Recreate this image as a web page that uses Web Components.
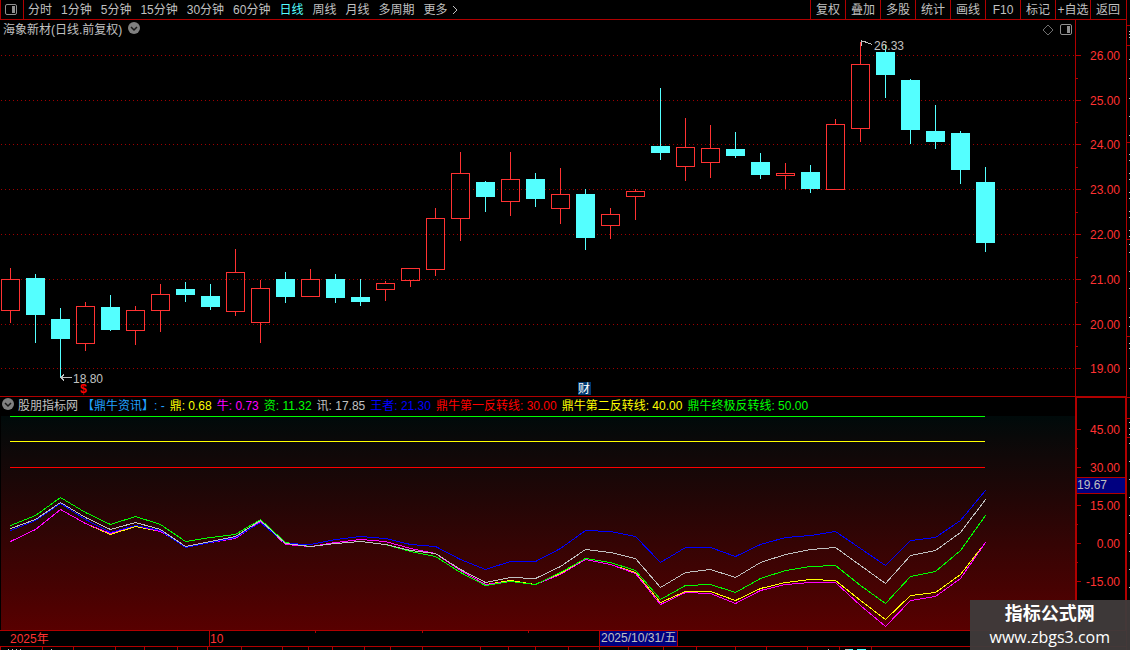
<!DOCTYPE html>
<html lang="zh-CN">
<head>
<meta charset="utf-8">
<title>海象新材 日线</title>
<style>
  :root {
    --line: #b00000;
    --up: #ff3232;
    --down: #54ffff;
    --text: #c0c0c0;
    --mark: #000080;
  }
  body {
    margin: 0;
    background: #000;
    color: var(--text);
    font: 12px/16px "Liberation Sans", "Noto Sans CJK SC", sans-serif;
  }
</style>
</head>
<body>
<chart-app></chart-app>

<script>
/* ────────────────────────────────────────────────────────
   data: y values are rows of the chart sheet
   (price pane 20-396, indicator pane 416-630)
   ──────────────────────────────────────────────────────── */
const STEP = 25;
const FIRST_X = 10;

// [rising, high, body top, body bottom, low]
const CANDLES = [
  [1, 268, 279, 311, 323], [0, 274, 278, 315, 343], [0, 308, 319, 339, 378], [1, 302, 306, 344, 351],
  [0, 295, 307, 330, 331], [1, 306, 310, 331, 345], [1, 284, 294, 311, 332], [0, 282, 289, 295, 302],
  [0, 284, 296, 307, 310], [1, 249, 272, 312, 316], [1, 280, 288, 323, 343], [0, 272, 279, 297, 303],
  [1, 269, 279, 297, 297], [0, 274, 279, 298, 303], [0, 279, 297, 302, 306], [1, 281, 283, 290, 301],
  [1, 268, 268, 281, 287], [1, 208, 218, 270, 276], [1, 152, 173, 219, 241], [0, 181, 182, 197, 212],
  [1, 152, 179, 202, 216], [0, 173, 179, 199, 207], [1, 168, 194, 209, 224], [0, 189, 194, 238, 250],
  [1, 208, 214, 226, 239], [1, 189, 191, 197, 220], [0, 88, 146, 153, 160], [1, 118, 147, 167, 181],
  [1, 125, 148, 163, 178], [0, 132, 149, 156, 158], [0, 153, 162, 175, 179], [1, 163, 173, 176, 189],
  [0, 165, 172, 189, 193], [1, 119, 124, 190, 190], [1, 42, 64, 129, 142], [0, 45, 52, 75, 98],
  [0, 79, 80, 130, 144], [0, 105, 131, 142, 149], [0, 131, 133, 170, 184], [0, 167, 182, 243, 252]
];

const SERIES = [
  { color: "#ffff00", ys: [541, 529, 509, 523, 534, 526, 531, 546, 542, 538, 521, 544, 546, 542, 539, 541, 548, 553, 570, 584,
    580, 584, 573, 559, 564, 572, 602, 591, 591, 600, 588, 582, 579, 580, 600, 619, 595, 592, 574, 542] },
  { color: "#ff00ff", ys: [541, 529, 509, 523, 533, 525, 531, 546, 542, 538, 521, 544, 546, 542, 539, 541, 548, 553, 570, 584,
    581, 584, 574, 559, 564, 573, 604, 592, 593, 603, 590, 584, 582, 582, 605, 626, 600, 596, 578, 542] },
  { color: "#00ff00", ys: [525, 515, 497, 512, 524, 516, 524, 541, 537, 534, 519, 542, 546, 543, 541, 544, 551, 556, 572, 585,
    581, 584, 572, 558, 562, 570, 599, 585, 584, 592, 578, 570, 566, 565, 585, 603, 576, 571, 550, 515] },
  { color: "#0000ff", ys: [530, 520, 503, 519, 532, 525, 530, 547, 542, 537, 522, 543, 544, 539, 536, 538, 544, 546, 559, 569,
    561, 561, 548, 530, 531, 536, 562, 547, 547, 556, 544, 537, 535, 531, 548, 565, 540, 537, 520, 490] },
  { color: "#c0c0c0", ys: [528, 519, 502, 517, 529, 522, 529, 546, 541, 536, 520, 543, 546, 543, 541, 544, 550, 553, 569, 582,
    577, 578, 566, 549, 552, 558, 587, 572, 569, 577, 562, 554, 549, 547, 565, 583, 555, 550, 532, 499] }
];

const LEVELS = [[416, "#00ff00"], [441, "#ffff00"], [467, "#ff0000"]];

const PRICE_TICKS = [[55, "26.00"], [100, "25.00"], [144, "24.00"], [189, "23.00"],
  [234, "22.00"], [279, "21.00"], [324, "20.00"], [368, "19.00"]];
const PRICE_MINOR = [78, 122, 167, 212, 257, 302, 346];
const VALUE_TICKS = [[429, "45.00"], [467, "30.00"], [505, "15.00"], [543, "0.00"], [581, "-15.00"]];
const VALUE_MINOR = [448, 486, 524, 562];

const LEGEND = [
  ["#ffff00", "鼎: 0.68"], ["#ff00ff", "牛: 0.73"], ["#00ff00", "资: 11.32"], ["#c0c0c0", "讯: 17.85"],
  ["#0000ff", "王者: 21.30"], ["#ff0000", "鼎牛第一反转线: 30.00"],
  ["#ffff00", "鼎牛第二反转线: 40.00"], ["#00ff00", "鼎牛终极反转线: 50.00"]
];

/* ────────────────────────────────────────────────────────
   helpers
   ──────────────────────────────────────────────────────── */
const BUTTON_CSS = `
  button { margin: 0; padding: 0; border: 0; background: none; color: inherit; font: inherit; cursor: pointer; }
  svg { display: block; }
`;

function define(name, render) {
  customElements.define(name, class extends HTMLElement {
    connectedCallback() {
      if (this.shadowRoot) return;
      this.attachShadow({ mode: "open" }).innerHTML = render(this);
    }
  });
}

const barX = i => FIRST_X + i * STEP;

function candle([rising, high, top, bottom, low], i) {
  const x = barX(i);
  const color = rising ? "var(--up)" : "var(--down)";
  const wick = (a, b) => b > a ? `<rect x="${x}" y="${a}" width="1" height="${b - a}" fill="${color}"/>` : "";
  const body = rising
    ? `<path d="M${x - 9} ${top}h19v${bottom - top}h-19zM${x - 8} ${top + 1}v${bottom - top - 2}h17v-${bottom - top - 2}z" fill="${color}"/>`
    : `<rect x="${x - 9}" y="${top}" width="19" height="${bottom - top}" fill="${color}"/>`;
  return wick(high, top) + body + wick(bottom, low);
}

/* ────────────────────────────────────────────────────────
   small parts
   ──────────────────────────────────────────────────────── */
define("fold-button", el => `
  <style>
    ${BUTTON_CSS}
    :host { display: block; flex: none; }
  </style>
  <button aria-label="${el.getAttribute("label")}">
    <svg width="12" height="12" viewBox="0 0 12 12">
      <circle cx="6" cy="6" r="6" fill="#808080"/>
      <path d="M3 5l3 3 3-3" fill="none" stroke="#181818" stroke-width="1.5"/>
    </svg>
  </button>`);

define("panel-icon", () => `
  <style>
    :host { display: block; }
    svg { display: block; }
  </style>
  <svg width="12" height="12" viewBox="0 0 12 12">
    <rect x=".5" y=".5" width="11" height="10" rx="1.5" fill="none" stroke="#909090"/>
    <path d="M7 2h3v7h-3z" fill="#909090"/>
  </svg>`);

define("period-bar", () => {
  const periods = ["分时", "1分钟", "5分钟", "15分钟", "30分钟", "60分钟", "日线", "周线", "月线", "多周期"];
  return `
  <style>
    ${BUTTON_CSS}
    :host { display: flex; align-items: stretch; }
    .panel { width: 24px; box-sizing: border-box; border: solid var(--line); border-width: 0 1px; padding: 0 4px; }
    nav { display: flex; gap: 9px; padding-left: 4px; white-space: nowrap; }
    .active { color: var(--down); }
    .more { display: flex; align-items: center; gap: 4px; }
  </style>
  <button class="panel" aria-label="侧栏"><panel-icon></panel-icon></button>
  <nav>
    ${periods.map(p => `<button class="${p === "日线" ? "active" : ""}">${p}</button>`).join("")}
    <button class="more">更多
      <svg width="6" height="10" viewBox="0 0 6 10"><path d="M1 1l4 4-4 4" fill="none" stroke="#c0c0c0"/></svg>
    </button>
  </nav>`;
});

define("tool-menu", () => `
  <style>
    ${BUTTON_CSS}
    :host { display: flex; white-space: nowrap; padding-right: 1px; }
    button { width: 35px; border-left: 1px solid var(--line); }
  </style>
  ${["复权", "叠加", "多股", "统计", "画线", "F10", "标记", "+自选", "返回"].map(t => `<button>${t}</button>`).join("")}`);

define("legend-item", el => `
  <style>
    :host { display: block; color: ${el.getAttribute("color")}; white-space: nowrap; }
  </style>
  <slot></slot>`);

define("site-stamp", () => `
  <style>
    :host {
      display: flex; flex-direction: column; align-items: center;
      padding: 2px 20px; white-space: nowrap;
      background: rgba(64, 58, 58, .96); color: #fff;
    }
    strong { font: bold 18px/24px "Liberation Sans", "Noto Sans CJK SC", sans-serif; }
    a { color: inherit; text-decoration: none; font: 16px/22px "Open Sans", "Noto Sans", sans-serif; }
  </style>
  <strong>指标公式网</strong>
  <a href="#">www.zbgs3.com</a>`);

/* ────────────────────────────────────────────────────────
   panes and axes
   ──────────────────────────────────────────────────────── */
define("price-pane", () => `
  <style>
    ${BUTTON_CSS}
    :host { display: block; position: relative; }
    header {
      position: absolute; inset: 0 0 auto 0; height: 19px;
      display: flex; align-items: center; gap: 6px; padding: 0 3px;
    }
    .tools { display: flex; align-items: center; gap: 6px; margin-left: auto; }
  </style>
  <svg width="100%" height="376" shape-rendering="crispEdges">
    <g transform="translate(0 -20)">
      ${PRICE_TICKS.map(([y]) => `<line x1="1" x2="100%" y1="${y}.5" y2="${y}.5" stroke="#a00000" stroke-dasharray="1 3"/>`).join("")}
      ${CANDLES.map(candle).join("")}
      <g fill="none" stroke="#c0c0c0">
        <path d="M861.5 46v-5h4M861 40.500l11 4"/>
        <path d="M61 377.500h11M64 374.500l-3 3 3 3"/>
      </g>
      <g fill="#c0c0c0">
        <text x="874" y="50">26.33</text>
        <text x="73" y="383">18.80</text>
      </g>
      <text x="80" y="393" fill="#ff0000" font-weight="bold">$</text>
      <rect x="578" y="382" width="13" height="13" fill="#003870"/>
      <text x="578" y="393" fill="#fff">财</text>
    </g>
  </svg>
  <header>
    <span>海象新材(日线.前复权)</span>
    <fold-button label="展开"></fold-button>
    <div class="tools">
      <button aria-label="标记点">
        <svg width="12" height="12" viewBox="0 0 12 12"><path d="M6 1l5 5-5 5-5-5z" fill="none" stroke="#707070"/></svg>
      </button>
      <button aria-label="右侧栏"><panel-icon></panel-icon></button>
    </div>
  </header>`);

define("indicator-pane", () => `
  <style>
    :host { display: block; border-top: 1px solid var(--line); }
    header, .title { display: flex; align-items: center; white-space: nowrap; }
    header { gap: 5px; height: 19px; padding: 0 2px 2px; box-sizing: border-box; }
    .title { gap: 4px; }
    .source { color: #20a0ff; }
    svg { display: block; margin-left: 1px; background: linear-gradient(#000a0a, #580000); }
  </style>
  <header>
    <div class="title">
      <fold-button label="折叠指标"></fold-button>
      <span>股朋指标网</span>
      <span class="source">【鼎牛资讯】: -</span>
    </div>
    ${LEGEND.map(([color, text]) => `<legend-item color="${color}">${text}</legend-item>`).join("")}
  </header>
  <svg width="100%" height="214" shape-rendering="crispEdges">
    <g transform="translate(-1 -416)">
      ${LEVELS.map(([y, color]) => `<rect x="10" y="${y}" width="975" height="1" fill="${color}"/>`).join("")}
      <g transform="translate(.5 .5)" fill="none">
        ${SERIES.map(s => `<polyline stroke="${s.color}" points="${s.ys.map((y, i) => `${barX(i)},${y}`).join(" ")}"/>`).join("")}
      </g>
    </g>
  </svg>`);

define("value-axis", el => {
  const price = el.getAttribute("kind") === "price";
  const ticks = price ? PRICE_TICKS : VALUE_TICKS;
  const minor = price ? PRICE_MINOR : VALUE_MINOR;
  const edge = price ? 1 : 2;
  const top = price ? 20 : 398;
  const height = price ? 376 : 232;
  const mark = price ? "" : `
    <rect x="0" y="477" width="100%" height="17" fill="var(--line)"/>
    <rect x="0" y="478" width="100%" height="15" fill="var(--mark)"/>
    <text x="0" y="489" fill="#c0c0c0">19.67</text>`;
  return `
  <style>
    :host { display: block; flex: none; width: 51px; box-sizing: border-box; border-left: ${edge}px solid var(--line); }
    :host([kind="value"]) { border-top: 2px solid var(--line); border-right: 1px solid var(--line); }
    svg { display: block; }
  </style>
  <svg width="100%" height="${height}" shape-rendering="crispEdges">
    <g transform="translate(0 -${top})">
      <g fill="var(--line)">
        ${ticks.map(([y]) => `<rect x="0" y="${y}" width="${6 - edge}" height="1"/>`).join("")}
        ${minor.map(y => `<rect x="0" y="${y}" width="${3 - edge}" height="1"/>`).join("")}
      </g>
      <g fill="var(--up)" text-anchor="end">
        ${ticks.map(([y, label]) => `<text x="${45 - edge}" y="${y + 5}">${label}</text>`).join("")}
      </g>
      ${mark}
    </g>
  </svg>`;
});

define("time-axis", () => `
  <style>
    :host { display: block; border: solid var(--line); border-width: 1px 0; }
    svg { display: block; overflow: visible; }
  </style>
  <svg width="100%" height="15" shape-rendering="crispEdges">
    <g fill="var(--line)">
      <rect x="209" y="0" width="1" height="15"/>
      ${[315, 422, 528].map(x => `<rect x="${x}" y="0" width="1" height="2"/>`).join("")}
      <rect x="599" y="-1" width="79" height="17"/>
    </g>
    <rect x="600" y="0" width="77" height="15" fill="var(--mark)"/>
    <g fill="var(--up)">
      <text x="10" y="12">2025年</text>
      <text x="210" y="12">10</text>
    </g>
    <text x="601" y="11" fill="#c0c0c0">2025/10/31/五</text>
  </svg>`);

// top edge of the quote table that continues below the window
define("table-edge", () => {
  const cols = [0, 42, 73, 115, 144, 177, 207, 241, 282, 308, 332, 364, 390, 422, 480, 508, 535,
    568, 599, 628, 663, 696, 735, 766, 807, 839, 871];
  return `
  <style>
    :host, svg { display: block; }
  </style>
  <svg width="100%" height="3" shape-rendering="crispEdges">
    <path d="${cols.map(x => `M${x} 0h1v3h-1z`).join("")}" fill="var(--line)"/>
    <path d="M8 2h1v1h-1zM12 2h1v1h-1zM16 2h1v1h-1zM20 2h1v1h-1zM51 2h1v1h-1zM828 2h1v1h-1zM845 2h4v1h-4z" fill="#c0c0c0"/>
    <path d="M849 2h4v1h-4zM857 2h9v1h-9z" fill="var(--down)"/>
  </svg>`;
});

define("side-rail", () => {
  const rules = [25, 45, 142, 239, 336, 397, 418, 437];
  const marks = [31, 34, 37, 59, 78, 98, 116, 135, 154, 160, 173, 179, 192, 198, 211, 217, 230, 236, 244, 252,
    271, 288, 317, 326, 343, 348, 368, 422, 428, 434, 443, 461, 479, 497, 515, 533, 551, 569, 587];
  return `
  <style>
    :host { display: block; flex: none; width: 3px; border-left: 1px solid var(--line); }
    svg { display: block; }
  </style>
  <svg width="3" height="650" shape-rendering="crispEdges">
    <path d="${rules.map(y => `M0 ${y}h3v1h-3z`).join("")}" fill="var(--line)"/>
    <path d="${marks.map(y => `M2 ${y}h1v1h-1z`).join("")}" fill="#c0c0c0"/>
  </svg>`;
});

/* ────────────────────────────────────────────────────────
   page
   ──────────────────────────────────────────────────────── */
define("chart-app", () => `
  <style>
    :host { display: flex; position: relative; overflow: hidden; }
    main { flex: 1; min-width: 0; display: flex; flex-direction: column; }
    .bar { display: flex; justify-content: space-between; height: 19px; border-bottom: 1px solid var(--line); }
    .row { display: flex; }
    price-pane, indicator-pane { flex: 1; min-width: 0; overflow: hidden; }
    site-stamp { position: absolute; right: 0; bottom: 0; }
  </style>
  <main>
    <div class="bar"><period-bar></period-bar><tool-menu></tool-menu></div>
    <div class="row"><price-pane></price-pane><value-axis kind="price"></value-axis></div>
    <div class="row"><indicator-pane></indicator-pane><value-axis kind="value"></value-axis></div>
    <time-axis></time-axis>
    <table-edge></table-edge>
  </main>
  <side-rail></side-rail>
  <site-stamp></site-stamp>`);
</script>
</body>
</html>
